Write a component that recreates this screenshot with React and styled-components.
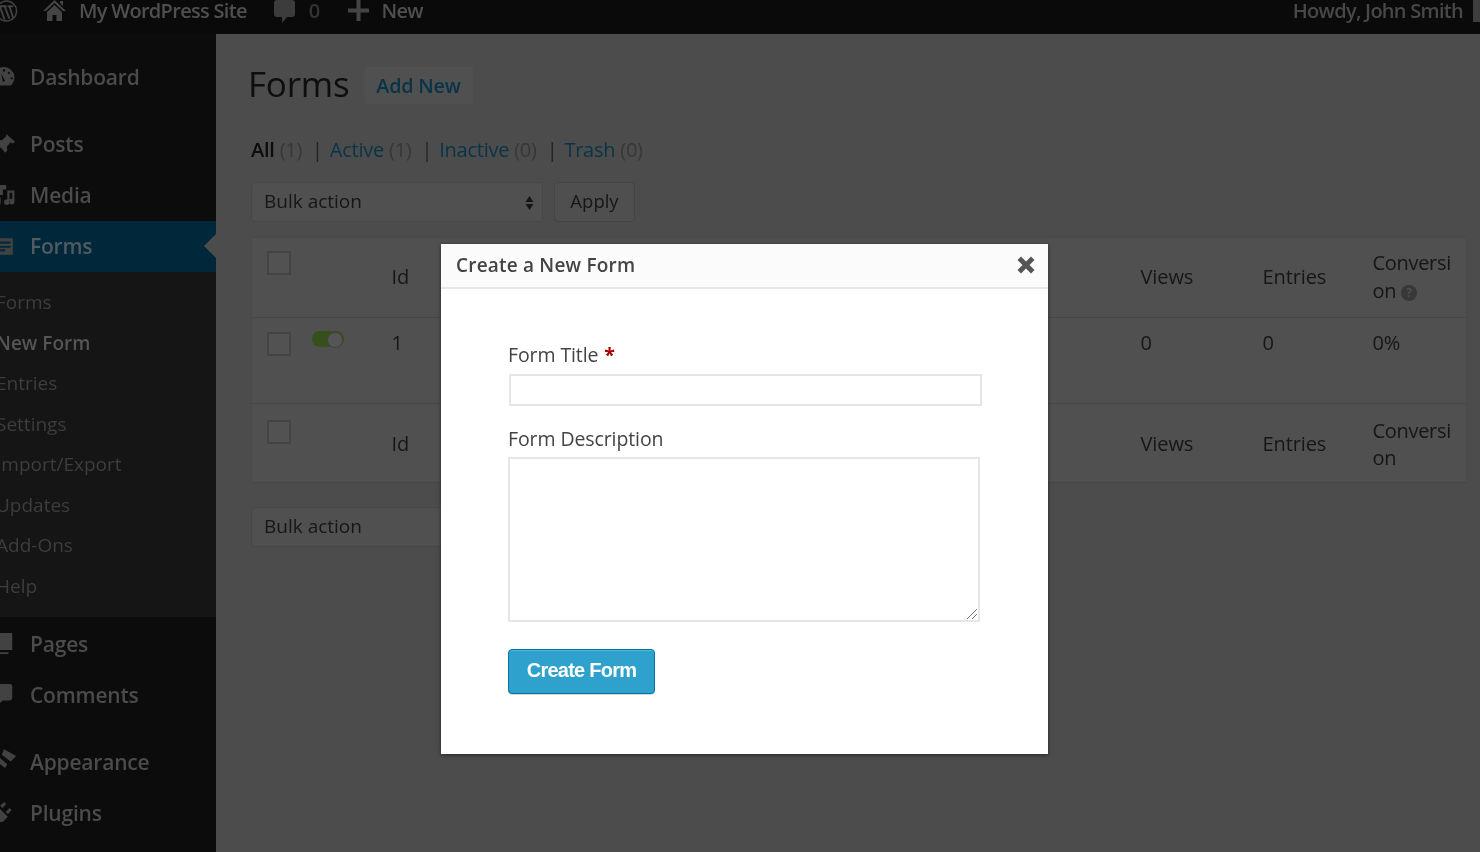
import React from "react";
import styled, { createGlobalStyle } from "styled-components";

const Global = createGlobalStyle`
  html, body { margin: 0; padding: 0; height: 100%; overflow: hidden; background: #4c4c4c; }
  #root { height: 852px; }
  * { box-sizing: border-box; }
`;

const Page = styled.div`
  width: 1480px; height: 852px; overflow: hidden; position: relative;
  display: grid; grid-template-columns: 216px 1fr; grid-template-rows: 34px 1fr;
  font-family: "Open Sans", "Liberation Sans", sans-serif;
  filter: blur(0.6px);
`;
const TopBar = styled.header`
  grid-column: 1 / 3; background: #0a0a0a; color: #4f4f4f;
  display: flex; align-items: flex-start; font-size: 20px; font-weight: 600; letter-spacing: -0.7px;
  line-height: 22px; padding-right: 17px; position: relative;
`;
const BarItem = styled.div`
  display: flex; align-items: center; gap: ${p => p.$gap || 10}px; margin-left: ${p => p.$ml || 0}px; height: 21px;
  color: ${p => p.$dim ? "#333" : "#4f4f4f"};
  svg { flex: none; }
`;
const Howdy = styled(BarItem)` margin-left: auto; color: #484848; letter-spacing: -0.72px; `;
const Avatar = styled.div`
  position: absolute; right: 0; top: 0; width: 7px; height: 22px; background: #3e3e3e;
`;
const Side = styled.nav`
  background: #0c0c0c; padding-top: 18px; color: #4b4b4b; font-size: 21px; font-weight: 600; letter-spacing: -0.2px;
  overflow: hidden;
`;
const MenuItem = styled.div`
  height: 51px; display: flex; align-items: center; position: relative;
  margin-top: ${p => p.$mt || 0}px;
  background: ${p => p.$active ? "#01283a" : "transparent"};
  color: ${p => p.$active ? "#4f5b60" : "#4b4b4b"};
  svg { position: absolute; left: -7px; top: 14px; color: #424242; overflow: visible; }
  span { margin-left: 30px; margin-bottom: 1px; }
  ${p => p.$active && `&::after { content: ""; position: absolute; right: 0; top: 13px; border: 12px solid transparent; border-right-color: #4c4c4c; border-left-width: 0; }`}
`;
const Sub = styled.div`
  background: #151515; padding: 10px 0 11px; margin-bottom: 2px; font-size: 19px; font-weight: 400; letter-spacing: 0;
`;
const SubItem = styled.div`
  height: 40.5px; line-height: 40.5px; margin-left: -4px; white-space: nowrap;
  color: ${p => p.$current ? "#555" : "#3d3d3d"};
  font-weight: ${p => p.$current ? 600 : 400};
`;
const Main = styled.main`
  background: #4c4c4c; padding: 27px 14px 0 35px; color: #0d0d0d; min-width: 0;
`;
const TitleRow = styled.div`
  display: flex; align-items: center; gap: 15px; height: 46px; margin-left: -3px;
`;
const Title = styled.h1`
  margin: 0; font-size: 35px; font-weight: 400; color: #0e0e0e; letter-spacing: -0.2px; line-height: 46px;
`;
const AddNew = styled.div`
  width: 108px; height: 37px; display: flex; align-items: center; justify-content: center; margin-top: 2px;
  background: #505050; color: #083448; font-size: 19.8px; font-weight: 600; letter-spacing: -0.2px; border-radius: 2px;
`;
const Filters = styled.div`
  display: flex; align-items: center; height: 28px; margin-top: 28px; font-size: 20px; letter-spacing: -0.25px; color: #373737;
`;
const FilterName = styled.span`
  color: ${p => p.$current ? "#0c0c0c" : "#083448"}; font-weight: ${p => p.$current ? 600 : 400}; margin-right: 5px;
`;
const Sep = styled.span` color: #222; margin: 0 7px 0 10px; `;
const Actions = styled.div`
  display: flex; gap: 11px; margin-top: 19px; align-items: center;
`;
const Select = styled.div`
  width: ${p => p.$w || 292}px; height: 40px; border: 1px solid #474747; border-radius: 4px; background: #505050;
  display: flex; align-items: center; padding: 0 8px 2px 12px; justify-content: space-between;
  font-size: 19px; color: #161616; letter-spacing: 0;
`;
const Arrows = styled.svg` width: 9px; height: 16px; margin-top: 3px; `;
const Apply = styled.div`
  width: 81px; height: 40px; border: 1px solid #444; border-radius: 4px; background: #4f4f4f;
  display: flex; align-items: center; justify-content: center; padding-bottom: 4px; font-size: 18.5px; color: #161616;
`;
const Table = styled.table`
  width: 1216px; margin-top: 15px; border-collapse: collapse; table-layout: fixed; background: #505050;
  border: 1px solid #494949; font-size: 20px; color: #161616; letter-spacing: -0.1px;
`;
const Row = styled.tr`
  height: ${p => p.$h}px;
  border-bottom: 1px solid #474747;
  --cell-pad: ${p => p.$pad || "0"};
`;
const Cell = styled.td`
  position: relative; vertical-align: ${p => p.$top ? "top" : "middle"};
  padding: ${p => p.$top ? "11px 0 0" : "var(--cell-pad)"};
  padding-left: ${p => p.$pl || 0}px;
  line-height: 27.5px;
`;
const Check = styled.div`
  width: 24px; height: 24px; border: 2px solid #444; background: #525252; margin-top: ${p => p.$mt || 0}px; margin-left: 15px;
`;
const Toggle = styled.div`
  width: 32px; height: 16px; border-radius: 8px; background: #35501a; position: relative; margin: 2px 0 0 ${p => p.$ml || 0}px;
  &::after { content: ""; position: absolute; right: 1px; top: 1px; width: 14px; height: 14px; border-radius: 50%; background: #555; border: 1px solid #444; }
`;
const Conv = styled.div` width: 84px; word-break: break-all; letter-spacing: -0.3px; `;
const Help = styled.span`
  display: inline-flex; width: 16px; height: 16px; border-radius: 50%; background: #383838; color: #4f4f4f; font-size: 12px; font-weight: 700;
  align-items: center; justify-content: center; vertical-align: 1px; margin-left: 5px; letter-spacing: 0; line-height: 16px;
`;
const Lower = styled.div` margin-top: 24px; `;

const Modal = styled.div`
  position: absolute; left: 441px; top: 244px; width: 607px; height: 510px; background: #fff;
  box-shadow: 0 1px 4px rgba(0,0,0,.5); display: flex; flex-direction: column;
`;
const ModalHead = styled.div`
  height: 45px; flex: none; background: #fbfbfb; border-bottom: 2px solid #e7e7e7; display: flex; align-items: center; justify-content: space-between;
  padding: 0 13px 1px 15px; color: #444; font-size: 19px; font-weight: 600; letter-spacing: 0.2px;
`;
const ModalBody = styled.div`
  padding: 52px 67px 0; display: flex; flex-direction: column; align-items: flex-start; color: #444;
`;
const Label = styled.label`
  font-size: 19.5px; line-height: 28px; letter-spacing: -0.1px; color: #444; margin-top: ${p => p.$mt || 0}px; display: block;
  b { color: #a00; font-weight: 700; margin-left: 1px; }
`;
const Input = styled.div`
  width: 473px; height: 32px; margin: 5px 0 0 1px; border: 2px solid #e6e6e6; background: #fff;
`;
const Area = styled.div`
  width: 472px; height: 165px; margin-top: 4px; border: 2px solid #e6e6e6; background: #fff; position: relative;
  svg { position: absolute; right: 0; bottom: 0; }
`;
const Create = styled.div`
  width: 147px; height: 45px; margin-top: 27px; padding-bottom: 2px; background: #2ea2cc; border: 1px solid #0074a2; border-radius: 4px;
  box-shadow: inset 0 1px 0 rgba(120,200,230,.5), 0 1px 0 rgba(0,0,0,.15);
  display: flex; align-items: center; justify-content: center; color: #fff; font-family: "Liberation Sans", Arial, sans-serif; font-size: 20px; font-weight: 700; letter-spacing: -0.75px;
`;

const Icon = ({ d, size = 22, vb = 20, ...r }) => (
  <svg width={size} height={size} viewBox={`0 0 ${vb} ${vb}`} fill="currentColor" {...r}><path d={d} fillRule="evenodd" /></svg>
);
const dash = "M10 1a9.500 9.500 0 0 0-9.500 9.500c0 2.900 1.300 5.500 3.300 7.200h12.400c2-1.700 3.300-4.300 3.300-7.200A9.500 9.500 0 0 0 10 1zM7.500 7l3.500 6.500-2 1zM9 3h2v2H9zM14.500 5l1.300 1.300-1.300 1.300-1.300-1.300zM16 10.500h2v1.500h-2z";
const pin = "M12 1l8 7-2 1.500-2-1-3.500 4 .5 3.500-2 2-4-5-5 6-.5-.5 4.500-6.500-4-4 2-2 4 .5 4-3.500z";
const media = "M0 1h12v4h-3v5H0zM4 12h3v6H4a2 2 0 0 1-2-2v-2a2 2 0 0 1 2-2zM13 6h6.500v10a2.500 2.500 0 1 1-2-2.400V8H15v8.500a2.500 2.500 0 1 1-2-2.400z";
const forms = "M1 3h17v15H1zM3 6v2h13V6zM3 10v1.500h13V10zM3 13v2h8v-2z";
const pages = "M0 0h17.500v15.500H0zM0 17.500h14V19H0z";
const comm = "M0 0h15.500a2 2 0 0 1 2 2v10a3 3 0 0 1-3 3H9l-6 5V0z";
const app = "M10-1.500l11 6-5 5-8-6zM6 6l7 6-2 3.500-8-6z";
const plug = "M10 0l2 2-3.500 3.500-2-2zM15 5.500l2 2-3.500 3.500-2-2zM5 5l8.500 8.500-3 3c-2 2-4 2-5.500 1L2 20l-2-2V10z";

const menu1 = [["Dashboard", dash, 0], ["Posts", pin, 16], ["Media", media, 0]];
const subs = ["Forms", "New Form", "Entries", "Settings", "Import/Export", "Updates", "Add-Ons", "Help"];
const menu2 = [["Pages", pages, 0], ["Comments", comm, 0], ["Appearance", app, 16], ["Plugins", plug, 0]];

const Item = ({ label, icon, mt, active }) => (
  <MenuItem $mt={mt} $active={active}><Icon d={icon} /><span>{label}</span></MenuItem>
);

export default function App() {
  return (
    <Page>
      <Global />
      <TopBar>
        <BarItem $ml={-5}>
          <svg width="23" height="24" viewBox="0 0 24 24" fill="none" stroke="#424242" strokeWidth="1.500">
            <circle cx="12" cy="12" r="10.500" />
            <path d="M5 7l5 14M10 7l5 13M15 7l4 12M4 7h8M13 7h6" strokeWidth="2" />
          </svg>
        </BarItem>
        <BarItem $ml={25} $gap={13}>
          <svg width="23" height="22" viewBox="0 0 23 22" fill="#444"><path d="M11.500 0L23 11h-3l-8.500-8L3 11H0zM4 12l7.500-7 7.500 7v9h-5.500v-6h-4v6H4zM17 1h3v5l-3-3z" /></svg>
          <span>My WordPress Site</span>
        </BarItem>
        <BarItem $ml={27} $gap={14} $dim>
          <svg width="21" height="24" viewBox="0 0 21 24" fill="#3c3c3c" style={{ marginTop: 2 }}><path d="M3 0h15a3 3 0 0 1 3 3v11a3 3 0 0 1-3 3h-5l-5 6v-6H3a3 3 0 0 1-3-3V3a3 3 0 0 1 3-3z" /></svg>
          <span>0</span>
        </BarItem>
        <BarItem $ml={28} $gap={13}>
          <svg width="21" height="21" viewBox="0 0 21 21" fill="#444"><path d="M8.500 0h4v8.500H21v4h-8.500V21h-4v-8.500H0v-4h8.500z" /></svg>
          <span>New</span>
        </BarItem>
        <Howdy>Howdy, John Smith</Howdy>
        <Avatar />
      </TopBar>
      <Side>
        {menu1.map(([l, i, m]) => <Item key={l} label={l} icon={i} mt={m} />)}
        <Item label="Forms" icon={forms} active />
        <Sub>
          {subs.map((s) => <SubItem key={s} $current={s === "New Form"}>{s}</SubItem>)}
        </Sub>
        {menu2.map(([l, i, m]) => <Item key={l} label={l} icon={i} mt={m} />)}
      </Side>
      <Main>
        <TitleRow>
          <Title>Forms</Title>
          <AddNew>Add New</AddNew>
        </TitleRow>
        <Filters>
          <FilterName $current>All</FilterName>(1)<Sep>|</Sep>
          <FilterName>Active</FilterName>(1)<Sep>|</Sep>
          <FilterName>Inactive</FilterName>(0)<Sep>|</Sep>
          <FilterName>Trash</FilterName>(0)
        </Filters>
        <Actions>
          <Select>Bulk action
            <Arrows viewBox="0 0 9 16" fill="#161616"><path d="M4.500 1L8.500 7h-8zM.5 9h8l-4 6z" /></Arrows>
          </Select>
          <Apply>Apply</Apply>
        </Actions>
        <Table>
          <colgroup>
            <col width="55" /><col width="85" /><col width="749" /><col width="122" /><col width="110" /><col />
          </colgroup>
          <tbody>
            <Row $h={80} $pad="0 0 2px">
              <Cell $top><Check $mt={2} /></Cell><Cell /><Cell>Id</Cell>
              <Cell>Views</Cell><Cell>Entries</Cell>
              <Cell><Conv>Conversion<Help>?</Help></Conv></Cell>
            </Row>
            <Row $h={86}>
              <Cell $top><Check $mt={3} /></Cell>
              <Cell $top $pl={5}><Toggle /></Cell>
              <Cell $top>1</Cell>
              <Cell $top>0</Cell><Cell $top>0</Cell><Cell $top>0%</Cell>
            </Row>
            <Row $h={79} $pad="2px 0 0">
              <Cell $top><Check $mt={5} /></Cell><Cell /><Cell>Id</Cell>
              <Cell>Views</Cell><Cell>Entries</Cell>
              <Cell><Conv>Conversion</Conv></Cell>
            </Row>
          </tbody>
        </Table>
        <Lower><Select>Bulk action</Select></Lower>
      </Main>
      <Modal>
        <ModalHead>
          Create a New Form
          <svg width="18" height="18" viewBox="0 0 18 18" fill="#555"><path d="M4 .5L9 5.500 14 .5 17.500 4l-5 5 5 5-3.500 3.500-5-5-5 5L.5 14l5-5-5-5z" /></svg>
        </ModalHead>
        <ModalBody>
          <Label>Form Title <b>*</b></Label>
          <Input />
          <Label $mt={19}>Form Description</Label>
          <Area>
            <svg width="12" height="12" viewBox="0 0 12 12" stroke="#777" strokeWidth="1"><path d="M1 11L11 1M6 11l5-5" /></svg>
          </Area>
          <Create>Create Form</Create>
        </ModalBody>
      </Modal>
    </Page>
  );
}
